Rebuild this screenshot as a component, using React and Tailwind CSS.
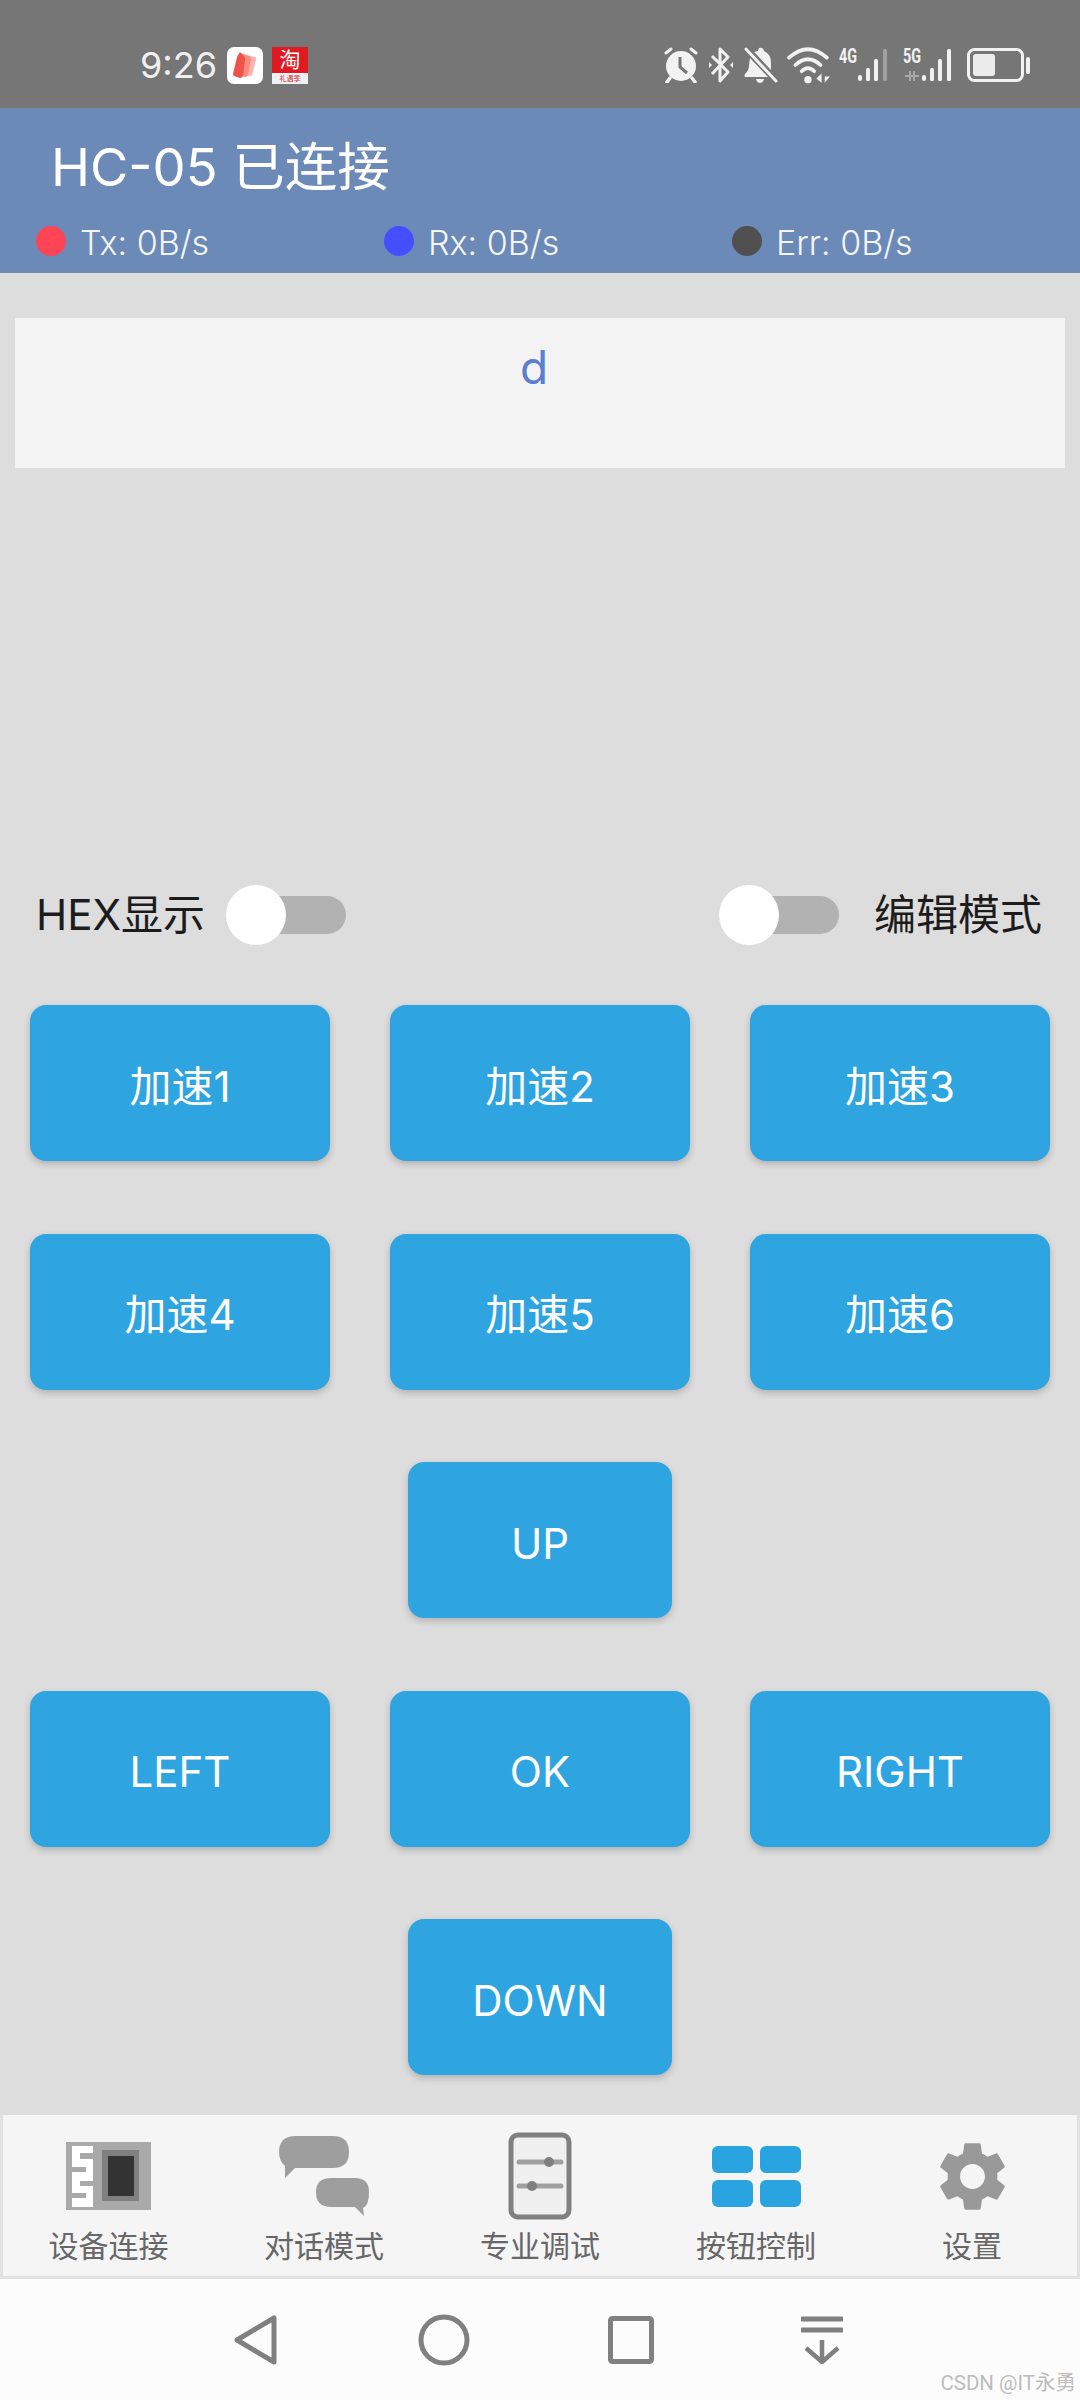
import React from "react";
import { MdSettings } from "react-icons/md";

const FONT = "font-['Inter','Noto_Sans_CJK_SC',sans-serif]";

const NotesApp = () => (
  <div className="w-9 h-[37px] rounded-[7px] bg-white flex items-center justify-center">
    <svg width="28" height="28" viewBox="0 0 28 28">
      <path d="M12 3 L24 6 Q26 7 25 9 L21 24 Q20 26 18 25 L10 23 Z" fill="#fbb5ae" />
      <path d="M9 2 L18 5 Q20 6 20 8 L17 24 Q16 26 14 26 L7 24 Z" fill="#fb8a80" />
      <path d="M6 6 L9 1 L13 5 Q14 6 14 8 L12 25 Q11 27 9 27 L3 25 Q2 24 2 23 Z" fill="#f0524c" />
    </svg>
  </div>
);

const TaobaoApp = () => (
  <div className="w-9 h-[37px] bg-[#e01a22] flex flex-col items-center">
    <div className="h-[30px] -mt-[4px] leading-[30px] text-[21px] text-white font-['Noto_Sans_CJK_SC',sans-serif]">淘</div>
    <div className="w-full h-[11px] bg-[#eef0f4] text-[#d0303a] text-[7px] leading-[11px] text-center font-['Noto_Sans_CJK_SC',sans-serif]">礼遇季</div>
  </div>
);

const AlarmIcon = () => (
  <svg width="36" height="36" viewBox="0 0 36 36">
    <circle cx="18" cy="19" r="15" fill="#f2f2f2" />
    <path d="M17 10 V20 L24 26" stroke="#767676" strokeWidth="3" fill="none" />
    <path d="M3 6 L8 2 M33 6 L28 2" stroke="#f2f2f2" strokeWidth="3" strokeLinecap="round" />
    <path d="M7 31 L4 35 M29 31 L32 35" stroke="#f2f2f2" strokeWidth="3.5" strokeLinecap="round" />
  </svg>
);

const BluetoothIcon = () => (
  <svg width="28" height="38" viewBox="0 0 26 38">
    <path d="M4 10 L20 26 L12 35 V3 L20 11 L4 28" stroke="#f2f2f2" strokeWidth="3" fill="none" strokeLinejoin="round" />
    <path d="M1 16 L4 19 L1 22 Z M25 16 L22 19 L25 22 Z" fill="#f2f2f2" />
  </svg>
);

const BellOffIcon = () => (
  <svg width="36" height="36" viewBox="0 0 34 36">
    <path d="M15 1 Q19 0 20 4 Q27 7 27 16 L27 25 L9 6 Q11 4 14 4 Z" fill="#f2f2f2" />
    <path d="M6 11 L24 30 H1 Q0 29 1 27 Q5 24 5 18 Z" fill="#f2f2f2" />
    <path d="M12 32 H20 Q19 36 16 36 Q13 36 12 32 Z" fill="#f2f2f2" />
    <path d="M2 2 L32 34" stroke="#f2f2f2" strokeWidth="3" strokeLinecap="round" />
    <path d="M4 0 L34 32" stroke="#767676" strokeWidth="2" />
  </svg>
);

const WifiIcon = () => (
  <svg width="44" height="38" viewBox="0 0 42 36">
    <path d="M2 11 Q20 -5 38 11" stroke="#f2f2f2" strokeWidth="3.5" fill="none" strokeLinecap="round" />
    <path d="M8 18 Q20 7 32 18" stroke="#f2f2f2" strokeWidth="3.5" fill="none" strokeLinecap="round" />
    <path d="M14 24 Q20 18 26 24" stroke="#f2f2f2" strokeWidth="3.5" fill="none" strokeLinecap="round" />
    <circle cx="20" cy="32" r="3.5" fill="#f2f2f2" />
    <path d="M33 26 V35 L28 31 Z M36 26 V35 L41 29 H36 Z" fill="#f2f2f2" />
  </svg>
);

// signal bars, last one may be dimmed
const Signal = ({ label, dimLast, arrows }) => (
  <svg width="56" height="44" viewBox="0 -4 56 44">
    <text
      x="0"
      y="16"
      fontSize="21"
      fontWeight="700"
      fill="#f2f2f2"
      fontFamily="Roboto, sans-serif"
      textLength="18"
      lengthAdjust="spacingAndGlyphs"
    >
      {label}
    </text>
    {arrows && <path d="M2 29 H16 M7 24 V34 M11 24 V34" stroke="#a8a8a8" strokeWidth="2" />}
    <rect x="19" y="28" width="4" height="6" rx="2" fill="#f2f2f2" />
    <rect x="27" y="21" width="4" height="13" rx="1.5" fill="#f2f2f2" />
    <rect x="35" y="12" width="4" height="22" rx="1.5" fill="#f2f2f2" />
    <rect x="44" y="2" width="4" height="32" rx="1.5" fill={dimLast ? "#a0a0a0" : "#f2f2f2"} />
  </svg>
);

const Battery = () => (
  <svg width="64" height="34" viewBox="0 0 64 34">
    <rect x="1.5" y="1.5" width="54" height="31" rx="6" fill="none" stroke="#f2f2f2" strokeWidth="3" />
    <rect x="6" y="6" width="22" height="22" rx="3" fill="#ececec" />
    <rect x="59" y="9" width="4" height="17" rx="2" fill="#f2f2f2" />
  </svg>
);

const StatusBar = () => (
  <div className="h-[108px] bg-[#767676] flex items-center justify-between pl-[140px] pr-[49px] pt-[22px] shrink-0">
    <div className="flex items-center">
      <span className="text-[36px] leading-none text-[#f0f0f0] mr-[10px]">9:26</span>
      <NotesApp />
      <div className="w-[9px]" />
      <TaobaoApp />
    </div>
    <div className="flex items-center gap-[8px]">
      <AlarmIcon />
      <BluetoothIcon />
      <BellOffIcon />
      <WifiIcon />
      <Signal label="4G" dimLast />
      <Signal label="5G" arrows />
      <Battery />
    </div>
  </div>
);

const Stat = ({ dot, text }) => (
  <div className="w-[348px] flex items-center gap-[14px]">
    <span className={`w-[30px] h-[30px] rounded-full -mt-[4px] ${dot}`} />
    <span className="text-[34px] leading-[40px] text-[#f4f6fa] font-light">{text}</span>
  </div>
);

const Header = () => (
  <div className="h-[165px] bg-[#6c8ab8] shrink-0 flex flex-col">
    <div className="pl-[51px] pt-[27px] text-[52.5px] leading-[64px] text-white">HC-05 已连接</div>
    <div className="flex pl-[36px] mt-[24px]">
      <Stat dot="bg-[#ff4455]" text="Tx: 0B/s" />
      <Stat dot="bg-[#4450ff]" text="Rx: 0B/s" />
      <Stat dot="bg-[#505050]" text="Err: 0B/s" />
    </div>
  </div>
);

const Toggle = () => (
  <div className="relative w-[120px] h-[60px] flex items-center justify-end">
    <div className="w-[100px] h-[38px] rounded-full bg-[#b2b2b2]" />
    <div className="absolute left-0 top-0 w-[60px] h-[60px] rounded-full bg-white" />
  </div>
);

const Btn = ({ label, narrow }) => (
  <button
    className={`h-[156px] pt-[6px] rounded-[16px] bg-[#2ea5e0] text-white text-[42px] shadow-[0_3px_7px_rgba(0,0,0,0.2)] ${
      narrow ? "w-[264px]" : "w-[300px]"
    }`}
  >
    {label}
  </button>
);

const Row = ({ children }) => <div className="flex justify-center gap-[60px]">{children}</div>;

const NavItem = ({ label, className, children }) => (
  <div className={`flex flex-col items-center ${className || ""}`}>
    <div className="h-[92px] flex items-center justify-center">{children}</div>
    <div className="text-[30px] leading-[36px] mt-[6px] text-[#676767]">{label}</div>
  </div>
);

const DeviceIcon = () => (
  <svg width="85" height="68" viewBox="0 0 85 68">
    <rect width="85" height="68" fill="#a9a9a9" />
    <path d="M6 4 H27 V11 H14 V17 H27 V39 H14 V44 H27 V65 H6 V56 H20 V51 H6 V30 H20 V25 H6 Z" fill="#ffffff" />
    <rect x="36" y="8" width="37" height="51" fill="#808080" />
    <rect x="42" y="14" width="26" height="40" fill="#333333" />
  </svg>
);

const ChatIcon = () => (
  <svg width="90" height="82" viewBox="0 0 90 82">
    <path d="M17 1 H54 Q70 1 70 17 Q70 33 54 33 H16 L6 43 L6 31 Q0 26 0 17 Q0 1 17 1 Z" fill="#9e9e9e" />
    <path d="M52 43 H76 Q90 43 90 57 Q90 71 84 73 L85 81 L76 72 H52 Q37 72 37 57 Q37 43 52 43 Z" fill="#9e9e9e" />
  </svg>
);

const TuneIcon = () => (
  <svg width="64" height="88" viewBox="0 0 64 88">
    <rect x="3" y="3" width="58" height="82" rx="7" fill="#f0f0f0" stroke="#808080" strokeWidth="5" />
    <path d="M11 30 H53" stroke="#a0a0a0" strokeWidth="5" strokeLinecap="round" />
    <circle cx="41" cy="30" r="5" fill="#808080" />
    <path d="M11 54 H53" stroke="#a0a0a0" strokeWidth="5" strokeLinecap="round" />
    <circle cx="24" cy="54" r="5" fill="#808080" />
  </svg>
);

const GridIcon = () => (
  <div className="grid grid-cols-2 gap-[7px]">
    <div className="w-[41px] h-[27px] rounded-[6px] bg-[#29a4e0]" />
    <div className="w-[41px] h-[27px] rounded-[6px] bg-[#29a4e0]" />
    <div className="w-[41px] h-[27px] rounded-[6px] bg-[#29a4e0]" />
    <div className="w-[41px] h-[27px] rounded-[6px] bg-[#29a4e0]" />
  </div>
);

const BottomTabs = () => (
  <div className="h-[164px] shrink-0 bg-[#f5f5f6] border-x-[3px] border-b-[3px] border-[#e2e2e2] grid grid-cols-[213px_216px_216px_216px_213px] pt-[15px]">
    <NavItem label="设备连接" className="pr-[2px]"><DeviceIcon /></NavItem>
    <NavItem label="对话模式"><ChatIcon /></NavItem>
    <NavItem label="专业调试"><TuneIcon /></NavItem>
    <NavItem label="按钮控制"><GridIcon /></NavItem>
    <NavItem label="设置" className="pl-[3px]"><MdSettings size={83} color="#999999" /></NavItem>
  </div>
);

const SystemNav = () => (
  <div className="relative flex-1 bg-[#fcfcfc] flex items-center pl-[233px]">
    <svg width="46" height="52" viewBox="0 0 46 52">
      <path d="M41 4 V48 L4 26 Z" fill="none" stroke="#808080" strokeWidth="5" strokeLinejoin="round" />
    </svg>
    <svg width="52" height="52" viewBox="0 0 52 52" className="ml-[139px]">
      <circle cx="26" cy="26" r="23" fill="none" stroke="#808080" strokeWidth="5" />
    </svg>
    <svg width="46" height="48" viewBox="0 0 46 48" className="ml-[138px]">
      <rect x="2.5" y="2.5" width="41" height="43" rx="2" fill="none" stroke="#808080" strokeWidth="5" />
    </svg>
    <svg width="42" height="48" viewBox="0 0 42 48" className="ml-[147px]">
      <path d="M1 3 H41 M1 14 H41" stroke="#808080" strokeWidth="5" strokeLinecap="round" />
      <path d="M21 24 V45 M5 32 L21 46 L37 32" stroke="#808080" strokeWidth="4.5" fill="none" />
    </svg>
    <span className="absolute right-[4px] bottom-[4px] text-[20.5px] leading-[26px] text-[#bcbcbc] font-['Roboto','Noto_Sans_CJK_SC',sans-serif]">CSDN @IT永勇</span>
  </div>
);

export default function App() {
  return (
    <div className={`w-[1080px] h-[2400px] flex flex-col bg-[#dddddd] ${FONT}`}>
      <StatusBar />
      <Header />
      <main className="h-[1842px] shrink-0 flex flex-col">
        <div className="mx-[15px] mt-[45px] h-[150px] bg-[#f3f3f4] flex justify-center pr-[12px]">
          <span className="text-[46px] leading-[50px] mt-[24px] text-[#5d7fd0]">d</span>
        </div>
        <div className="flex items-center justify-between pl-[36px] pr-[38px] mt-[417px]">
          <div className="flex items-center gap-[21px]">
            <span className="text-[42px] leading-[60px] text-[#1c1c1c]">HEX显示</span>
            <Toggle />
          </div>
          <div className="flex items-center gap-[35px]">
            <Toggle />
            <span className="text-[42px] leading-[60px] text-[#1c1c1c]">编辑模式</span>
          </div>
        </div>
        <div className="flex flex-col gap-[72.5px] mt-[60px]">
          <Row><Btn label="加速1" /><Btn label="加速2" /><Btn label="加速3" /></Row>
          <Row><Btn label="加速4" /><Btn label="加速5" /><Btn label="加速6" /></Row>
          <Row><Btn label="UP" narrow /></Row>
          <Row><Btn label="LEFT" /><Btn label="OK" /><Btn label="RIGHT" /></Row>
          <Row><Btn label="DOWN" narrow /></Row>
        </div>
      </main>
      <BottomTabs />
      <SystemNav />
    </div>
  );
}
